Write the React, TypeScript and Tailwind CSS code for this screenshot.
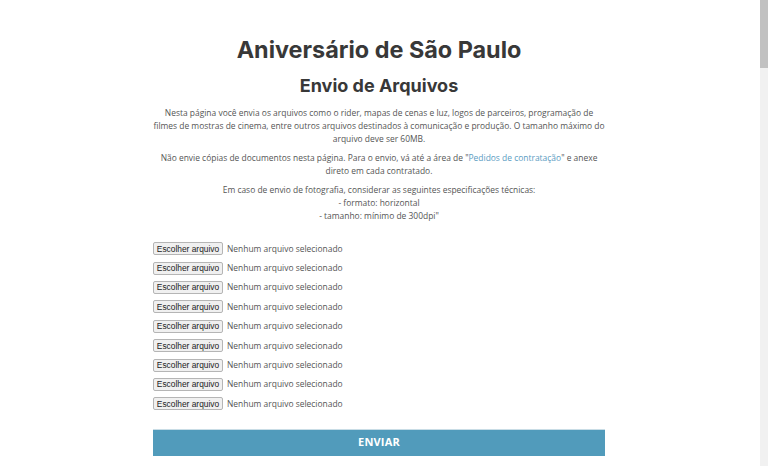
import React from "react";

const body = { fontFamily: '"Open Sans", "Noto Sans", sans-serif' };
const title = { fontFamily: 'Inter, "Noto Sans", sans-serif' };

function FileRow() {
  return (
    <div className="flex h-[19.4px] items-center">
      <span
        className="flex h-[13px] w-[70px] items-center justify-center rounded-[2px] border border-[#b5b5b5] bg-[#f0f0f0] text-[8.4px] leading-none text-[#222]"
        style={{ fontFamily: '"Liberation Sans", Arial, sans-serif' }}
      >
        Escolher arquivo
      </span>
      <span className="ml-[4px] text-[8.45px] leading-none text-[#555]" style={body}>
        Nenhum arquivo selecionado
      </span>
    </div>
  );
}

export default function App() {
  return (
    <div className="flex h-[466px] w-[768px] overflow-hidden bg-white">
      <main className="flex flex-1 justify-center pr-[2px]">
        <div className="flex w-[452px] flex-col">
          <h1
            className="mt-[36px] text-center text-[23.4px] font-bold leading-[28px] text-[#383838]"
            style={title}
          >
            Aniversário de São Paulo
          </h1>
          <h2
            className="mt-[10px] text-center text-[18px] font-bold leading-[24px] text-[#383838]"
            style={title}
          >
            Envio de Arquivos
          </h2>
          <div className="mt-[7.5px] text-center text-[8.45px] leading-[13.2px] text-[#555]" style={body}>
            <p className="whitespace-nowrap">
              Nesta página você envia os arquivos como o rider, mapas de cenas e luz, logos de parceiros, programação de
              <br />
              filmes de mostras de cinema, entre outros arquivos destinados à comunicação e produção. O tamanho máximo do
              <br />
              arquivo deve ser 60MB.
            </p>
            <p className="mt-[5.5px] whitespace-nowrap">
              Não envie cópias de documentos nesta página. Para o envio, vá até a área de "
              <span className="text-[#5b9bc2]">Pedidos de contratação</span>" e anexe
              <br />
              direto em cada contratado.
            </p>
            <p className="mt-[5.5px] whitespace-nowrap">
              Em caso de envio de fotografia, considerar as seguintes especificações técnicas:
              <br />- formato: horizontal
              <br />- tamanho: mínimo de 300dpi"
            </p>
          </div>
          <div className="mt-[17px] flex flex-col">
            {Array.from({ length: 9 }).map((_, i) => (
              <FileRow key={i} />
            ))}
          </div>
          <button
            className="mt-[15px] h-[27px] w-full shrink-0 border-t border-[#c9dde6] bg-[#519bbb] text-[11px] font-bold tracking-[0.2px] text-white"
            style={body}
          >
            ENVIAR
          </button>
        </div>
      </main>
      <div className="w-[8px] bg-[#f1f1f1]">
        <div className="h-[68px] bg-[#c1c1c1]" />
      </div>
    </div>
  );
}
